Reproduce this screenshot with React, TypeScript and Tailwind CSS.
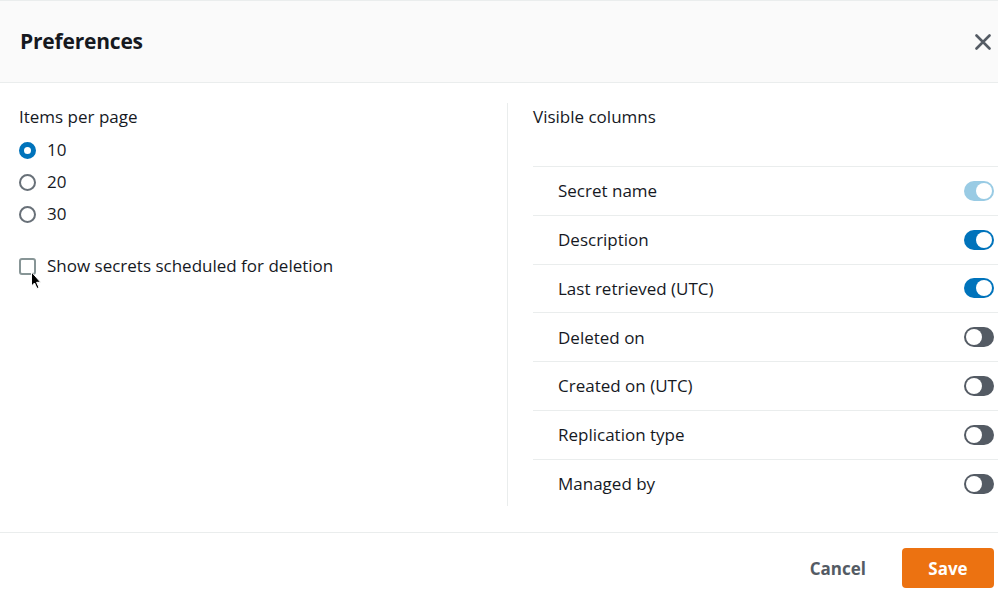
const columns = [
  { label: 'Secret name', state: 'locked' },
  { label: 'Description', state: 'on' },
  { label: 'Last retrieved (UTC)', state: 'on' },
  { label: 'Deleted on', state: 'off' },
  { label: 'Created on (UTC)', state: 'off' },
  { label: 'Replication type', state: 'off' },
  { label: 'Managed by', state: 'off' },
];

const Toggle = ({ state }: { state: string }) => {
  const bg =
    state === 'locked' ? 'bg-[#99cbe4]' : state === 'on' ? 'bg-[#0073bb]' : 'bg-[#545b64]';
  const pos = state === 'off' ? 'justify-start' : 'justify-end';
  return (
    <div className={`w-[30px] h-5 rounded-full p-[2px] flex items-center ${bg} ${pos}`}>
      <div className="w-4 h-4 rounded-full bg-white" />
    </div>
  );
};

const Radio = ({ checked, label }: { checked: boolean; label: string }) => (
  <div className="h-8 flex items-center gap-[11px]">
    {checked ? (
      <div className="w-[17px] h-[17px] rounded-full border-[5px] border-[#0073bb] bg-white" />
    ) : (
      <div className="w-[17px] h-[17px] rounded-full border-2 border-[#687078] bg-white" />
    )}
    <span>{label}</span>
  </div>
);

const App = () => {
  return (
    <div className="w-[998px] h-[594px] overflow-hidden bg-white text-[#16191f] text-[17px] font-['Open_Sans',sans-serif]">
      <div className="h-[83px] border-t border-b border-[#eaeded] bg-[#fafafa] flex items-center justify-between pl-5 pr-[7px]">
        <h2 className="text-[21px] font-bold tracking-[-0.2px]">Preferences</h2>
        <svg width="16" height="16" viewBox="0 0 16 16" className="mt-[1px]">
          <path
            d="M1.5 1.5 L14.5 14.5 M14.5 1.5 L1.5 14.5"
            stroke="#545b64"
            strokeWidth="2.6"
            strokeLinecap="round"
          />
        </svg>
      </div>

      <div className="h-[449px] pt-5 pb-[26px] flex">
        <div className="relative w-[508px] h-full border-r border-[#eaeded] pl-[19px]">
          <div className="leading-7">Items per page</div>
          <div className="mt-[3px]">
            <Radio checked label="10" />
            <Radio checked={false} label="20" />
            <Radio checked={false} label="30" />
          </div>
          <div className="mt-5 h-8 flex items-center gap-[11px]">
            <div className="w-[17px] h-[17px] rounded-[3px] border-2 border-[#879596] bg-white" />
            <span>Show secrets scheduled for deletion</span>
          </div>
          <svg
            className="absolute left-[30px] top-[168px]"
            width="12"
            height="19"
            viewBox="0 0 12 19"
          >
            <path
              d="M1.5 1 L1.5 15 L4.5 12 L7 17.5 L9 16.6 L6.6 11.3 L10.6 11.3 Z"
              fill="#000"
              stroke="#fff"
              strokeWidth="1"
              strokeLinejoin="round"
            />
          </svg>
        </div>

        <div className="flex-1 pl-[25px]">
          <div className="leading-7">Visible columns</div>
          <div className="mt-[35px]">
            {columns.map((c) => (
              <div
                key={c.label}
                className="h-[48.8px] border-t border-[#eaeded] flex items-center justify-between pl-[25px] pr-1"
              >
                <span>{c.label}</span>
                <Toggle state={c.state} />
              </div>
            ))}
          </div>
        </div>
      </div>

      <div className="h-[62px] border-t border-[#eaeded] flex items-start justify-end gap-4 pt-[15px] pr-1">
        <button className="h-10 px-5 pt-[2px] font-bold text-[#545b64]">Cancel</button>
        <button className="h-10 w-[92px] pt-[1px] rounded-[4px] bg-[#ec7211] text-white font-bold">
          Save
        </button>
      </div>
    </div>
  );
};

export default App;
